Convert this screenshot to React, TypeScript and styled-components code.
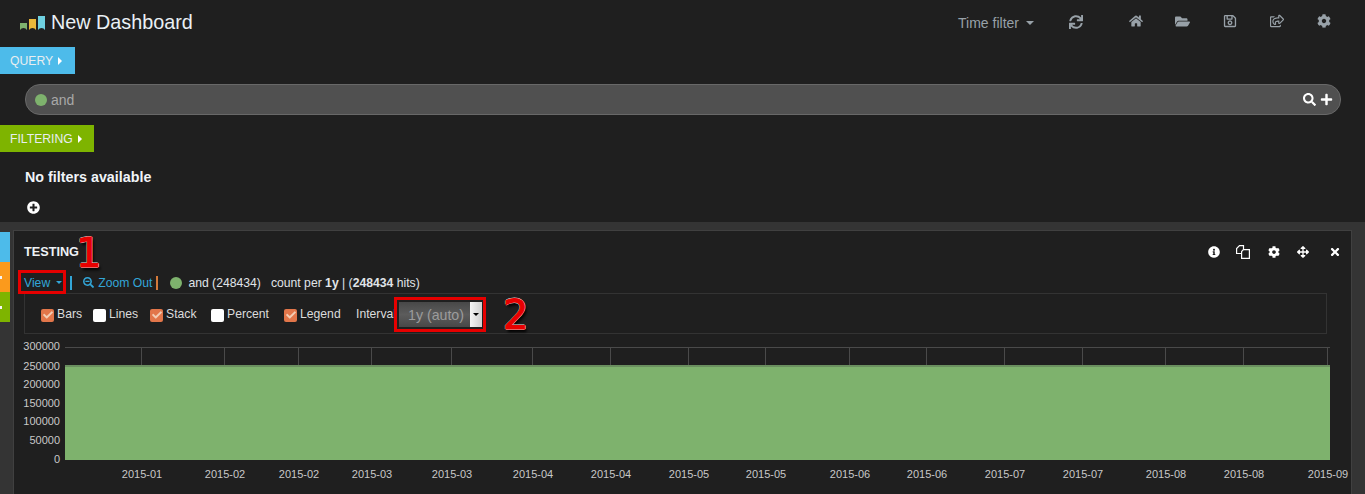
import React from "react";
import styled, { createGlobalStyle } from "styled-components";
import {
  FaHome, FaFolderOpen, FaRegSave, FaRegShareSquare, FaCog, FaSync, FaSearch, FaPlus,
  FaPlusCircle, FaSearchMinus, FaInfoCircle, FaArrowsAlt, FaTimes, FaCheck,
} from "react-icons/fa";

const Global = createGlobalStyle`
  html, body { margin: 0; padding: 0; background: #1f1f1f; overflow: hidden; }
  body { font-family: "Liberation Sans", Arial, sans-serif; color: #c8c8c8; }
  * { box-sizing: border-box; }
`;

const Page = styled.div`
  width: 1365px;
  height: 494px;
  overflow: hidden;
  position: relative;
  background: #1f1f1f;
`;

const Navbar = styled.header`
  height: 47px;
  display: flex;
  align-items: flex-start;
  padding: 9px 0 0 20px;
`;

const Brand = styled.div`
  display: flex;
  align-items: center;
  gap: 5px;
  font-size: 19.8px;
  line-height: 26px;
  color: #eaf0f5;
`;

const NavRight = styled.nav`
  margin-left: auto;
  display: flex;
  align-items: center;
  height: 26px;
  color: #98a1a8;
  padding-right: 18px;
`;

const TimeFilter = styled.span`
  font-size: 14px;
  display: flex;
  align-items: center;
  gap: 7px;
  margin-right: 35px;
  padding-top: 2px;
`;

const Caret = styled.i<{ $c?: string; $s?: number }>`
  display: inline-block;
  width: 0;
  height: 0;
  border-left: ${(p) => p.$s ?? 4}px solid transparent;
  border-right: ${(p) => p.$s ?? 4}px solid transparent;
  border-top: ${(p) => p.$s ?? 4}px solid ${(p) => p.$c ?? "currentColor"};
`;

const NavIcon = styled.span<{ $w: number; $up?: number; $size?: number; $ml?: number }>`
  width: ${(p) => p.$w}px;
  margin-left: ${(p) => p.$ml ?? 0}px;
  display: flex;
  justify-content: center;
  font-size: ${(p) => p.$size ?? 14}px;
  transform: translateY(${(p) => p.$up ?? 0}px);
`;

const SectionTab = styled.div<{ $bg: string; $w: number }>`
  width: ${(p) => p.$w}px;
  height: 27px;
  background: ${(p) => p.$bg};
  color: #e8eef0;
  font-size: 12.2px;
  display: flex;
  align-items: center;
  padding-left: 10px;
  gap: 5px;
`;

const TriRight = styled.i`
  display: inline-block;
  width: 0;
  height: 0;
  border-top: 4px solid transparent;
  border-bottom: 4px solid transparent;
  border-left: 4px solid #fff;
`;

const QueryRow = styled.div`
  margin: 10px 24px 10px 25px;
  height: 31px;
  background: #505050;
  border: 1px solid #686868;
  border-radius: 15px;
  display: flex;
  align-items: center;
  padding: 0 8px 0 9px;
  font-size: 14px;
  color: #a8a8a8;
`;

const Dot = styled.span<{ $size: number; $ml?: number }>`
  width: ${(p) => p.$size}px;
  height: ${(p) => p.$size}px;
  margin-left: ${(p) => p.$ml ?? 0}px;
  border-radius: 50%;
  background: #7eb26d;
  flex: none;
`;

const QueryText = styled.span`
  margin-left: 4px;
`;

const QueryActions = styled.span`
  margin-left: auto;
  display: flex;
  align-items: center;
  gap: 4px;
  color: #fff;
  font-size: 13px;
  transform: translateX(1px);
`;

const NoFilters = styled.div`
  margin: 16px 0 0 25px;
  font-size: 14.3px;
  line-height: 18px;
  font-weight: 700;
  color: #f0f4f8;
`;

const AddFilter = styled.div`
  margin: 14px 0 0 27px;
  height: 15px;
  font-size: 13px;
  color: #fff;
  display: flex;
  align-items: center;
`;

const Row = styled.section`
  margin-top: 7px;
  height: 272px;
  background: #343434;
  display: flex;
  padding-top: 8px;
`;

const RowTabs = styled.div`
  width: 10px;
  margin-top: 2px;
  flex: none;
  display: flex;
  flex-direction: column;
`;

const RowTab = styled.div<{ $bg: string }>`
  height: 30px;
  background: ${(p) => p.$bg};
  display: flex;
  align-items: center;
`;

const TabMark = styled.span`
  width: 2px;
  height: 3px;
  background: #f4f4f4;
`;

const Panel = styled.div`
  margin-left: 3px;
  width: 1339px;
  background: #1f1f1f;
  border: 1px solid #404040;
  border-bottom: 0;
  padding: 0 0 0 10px;
  display: flex;
  flex-direction: column;
`;

const PanelHead = styled.div`
  height: 32px;
  padding-top: 11px;
  display: flex;
  align-items: flex-start;
`;

const PanelTitle = styled.h3`
  margin: 0;
  font-size: 12.7px;
  line-height: 20px;
  font-weight: 700;
  color: #eef2f6;
`;

const PanelTools = styled.div`
  margin-left: auto;
  display: flex;
  align-items: center;
  height: 20px;
  color: #fff;
  padding-right: 6px;
`;

const Tool = styled.span<{ $w: number }>`
  width: ${(p) => p.$w}px;
  display: flex;
  justify-content: center;
  font-size: 12px;
`;

const LegendRow = styled.div`
  margin-top: 9px;
  height: 21px;
  display: flex;
  align-items: center;
  font-size: 12.2px;
  color: #e0e4e8;
  white-space: nowrap;
`;

const LinkText = styled.span<{ $ml?: number }>`
  color: #33a6d8;
  display: flex;
  align-items: center;
  gap: 4px;
  margin-left: ${(p) => p.$ml ?? 0}px;
`;

const ViewCaret = styled(Caret)`
  margin-left: 2px;
`;

const Sep = styled.span<{ $c: string; $ml: number }>`
  width: 2px;
  height: 14px;
  background: ${(p) => p.$c};
  margin-left: ${(p) => p.$ml}px;
  flex: none;
`;

const LegendText = styled.span<{ $ml: number }>`
  margin-left: ${(p) => p.$ml}px;
`;

const Options = styled.div`
  width: 1303px;
  height: 41px;
  border: 1px solid #333;
  display: flex;
  align-items: center;
  padding: 0 0 0 16px;
  font-size: 12.2px;
  color: #dcdcdc;
`;

const Check = styled.label<{ $w: number }>`
  width: ${(p) => p.$w}px;
  display: flex;
  align-items: center;
  gap: 3px;
  flex: none;
`;

const Box = styled.span<{ $on?: boolean }>`
  width: 13px;
  height: 13px;
  margin-top: 3px;
  border-radius: 2px;
  background: ${(p) => (p.$on ? "#e2764a" : "#fff")};
  display: flex;
  align-items: center;
  justify-content: center;
  color: #f3cdb4;
  font-size: 10px;
  flex: none;
`;

const IntervalLabel = styled.span`
  width: 38px;
  white-space: nowrap;
  flex: none;
`;

const Select = styled.div`
  width: 83px;
  height: 25px;
  margin: 2px 0 0 5px;
  background: linear-gradient(#484848, #5c5c5c 50%, #484848);
  color: #9c9c9c;
  font-size: 14.2px;
  display: flex;
  align-items: center;
  padding-left: 9px;
  position: relative;
`;

const SelectArrow = styled.span`
  margin-left: auto;
  width: 12px;
  height: 100%;
  background: linear-gradient(90deg, #f4f4f4, #cfcfcf);
  display: flex;
  align-items: center;
  justify-content: center;
`;

const Chart = styled.svg`
  display: block;
  margin: 5px 0 0 -10px;
  flex: none;
`;

const Highlight = styled.div<{ $x: number; $y: number; $w: number; $h: number }>`
  position: absolute;
  left: ${(p) => p.$x}px;
  top: ${(p) => p.$y}px;
  width: ${(p) => p.$w}px;
  height: ${(p) => p.$h}px;
  border: 3px solid #e60000;
`;

const Callout = styled.div<{ $x: number; $y: number; $size: number }>`
  position: absolute;
  left: ${(p) => p.$x}px;
  top: ${(p) => p.$y}px;
  font-family: "DejaVu Sans", sans-serif;
  font-size: ${(p) => p.$size}px;
  line-height: 1;
  color: #e80000;
  -webkit-text-stroke: 1.2px #e80000;
  text-shadow: 1px 0 0 #ddd, -1px 0 0 #ddd, 0 1px 0 #ddd, 0 -1px 0 #ddd, 2px 3px 3px #000;
`;

const xTicks: [number, string][] = [
  [141, "2015-01"], [224, "2015-02"], [298, "2015-02"], [371, "2015-03"], [451, "2015-03"],
  [532, "2015-04"], [610, "2015-04"], [688, "2015-05"], [765, "2015-05"], [849, "2015-06"],
  [926, "2015-06"], [1004, "2015-07"], [1082, "2015-07"], [1165, "2015-08"], [1243, "2015-08"], [1327, "2015-09"],
];
const yTicks: [number, string][] = [
  [350, "300000"], [370, "250000"], [388, "200000"], [407, "150000"], [425, "100000"], [444, "50000"], [463, "0"],
];
const CHART_TOP = 339;

function Logo() {
  return (
    <svg width="26" height="16" viewBox="0 0 26 16" style={{ marginTop: 3 }}>
      <path d="M0 7h7v7l-1.5-1.5L3.5 12 1.5 12.5 0 14z" fill="#7eb26d" />
      <path d="M9 3h7v11l-1.5-1.5-2-.5-2 .5L9 14z" fill="#eab839" />
      <path d="M18 0h7v14l-1.5-1.5-2-.5-2 .5L18 14z" fill="#6ed0e0" />
    </svg>
  );
}

function CopyIcon() {
  return (
    <svg width="14" height="14" viewBox="0 0 14 14" fill="#1f1f1f" stroke="#fff" strokeWidth="1.2">
      <path d="M3.5 .6H7.5V8.5H.6V3.5z" />
      <path d="M7.5 4.6H13.4V13.4H5.6V6.5z" />
    </svg>
  );
}

export default function App() {
  return (
    <Page>
      <Global />
      <Navbar>
        <Brand><Logo />New Dashboard</Brand>
        <NavRight>
          <TimeFilter>Time filter <Caret /></TimeFilter>
          <NavIcon $w={14}><FaSync /></NavIcon>
          <NavIcon $w={47} $up={-1} $ml={29}><FaHome /></NavIcon>
          <NavIcon $w={47} $up={-1} $size={15}><FaFolderOpen /></NavIcon>
          <NavIcon $w={48} $up={-1}><FaRegSave /></NavIcon>
          <NavIcon $w={46} $up={-1}><FaRegShareSquare /></NavIcon>
          <NavIcon $w={47} $up={-1}><FaCog /></NavIcon>
        </NavRight>
      </Navbar>

      <SectionTab $bg="#4dbbea" $w={75}>QUERY <TriRight /></SectionTab>
      <QueryRow>
        <Dot $size={12} />
        <QueryText>and</QueryText>
        <QueryActions><FaSearch /><FaPlus /></QueryActions>
      </QueryRow>

      <SectionTab $bg="#7eb400" $w={94}>FILTERING <TriRight /></SectionTab>
      <NoFilters>No filters available</NoFilters>
      <AddFilter><FaPlusCircle /></AddFilter>

      <Row>
        <RowTabs>
          <RowTab $bg="#4dbbea" />
          <RowTab $bg="#fb9a1c"><TabMark /></RowTab>
          <RowTab $bg="#7eb400"><TabMark /></RowTab>
        </RowTabs>
        <Panel>
          <PanelHead>
            <PanelTitle>TESTING</PanelTitle>
            <PanelTools>
              <Tool $w={14}><FaInfoCircle /></Tool>
              <Tool $w={44}><CopyIcon /></Tool>
              <Tool $w={17}><FaCog /></Tool>
              <Tool $w={42}><FaArrowsAlt /></Tool>
              <Tool $w={21}><FaTimes /></Tool>
            </PanelTools>
          </PanelHead>
          <LegendRow>
            <LinkText>View <ViewCaret $s={3.5} $c="#33a6d8" /></LinkText>
            <Sep $c="#33a6d8" $ml={8} />
            <LinkText $ml={11}><FaSearchMinus size={11} /> Zoom Out</LinkText>
            <Sep $c="#d47a3a" $ml={4} />
            <Dot $size={12} $ml={12} />
            <LegendText $ml={6}>and (248434)</LegendText>
            <LegendText $ml={10}>count per <b>1y</b> | (<b>248434</b> hits)</LegendText>
          </LegendRow>
          <Options>
            <Check $w={52}><Box $on><FaCheck /></Box>Bars</Check>
            <Check $w={57}><Box />Lines</Check>
            <Check $w={61}><Box $on><FaCheck /></Box>Stack</Check>
            <Check $w={73}><Box />Percent</Check>
            <Check $w={72}><Box $on><FaCheck /></Box>Legend</Check>
            <IntervalLabel>Interval</IntervalLabel>
            <Select>1y (auto)<SelectArrow><Caret $s={3} $c="#000" /></SelectArrow></Select>
          </Options>
          <Chart width="1338" height="150" viewBox={`14 ${CHART_TOP} 1338 150`}>
            <line x1="65" x2="1330" y1="347.5" y2="347.5" stroke="#4a4a4a" />
            {xTicks.map(([x]) => (
              <line key={x} x1={x + 0.5} x2={x + 0.5} y1="347" y2="366" stroke="#4a4a4a" />
            ))}
            <rect x="65" y="366" width="1265" height="94" fill="#7eb26d" />
            <rect x="65" y="365" width="1265" height="2" fill="#6a8f5f" />
            <g fontFamily="Liberation Sans, Arial, sans-serif" fontSize="11" fill="#c8c8c8">
              {yTicks.map(([y, t]) => (
                <text key={t} x="60" y={y} textAnchor="end">{t}</text>
              ))}
              {xTicks.map(([x, t]) => (
                <text key={x + t} x={x + 1} y="478" textAnchor="middle">{t}</text>
              ))}
            </g>
          </Chart>
        </Panel>
      </Row>

      <Highlight $x={18} $y={270} $w={48} $h={24} />
      <Highlight $x={394} $y={297} $w={92} $h={35} />
      <Callout $x={76} $y={233} $size={40}>1</Callout>
      <Callout $x={503} $y={295} $size={40}>2</Callout>
    </Page>
  );
}
